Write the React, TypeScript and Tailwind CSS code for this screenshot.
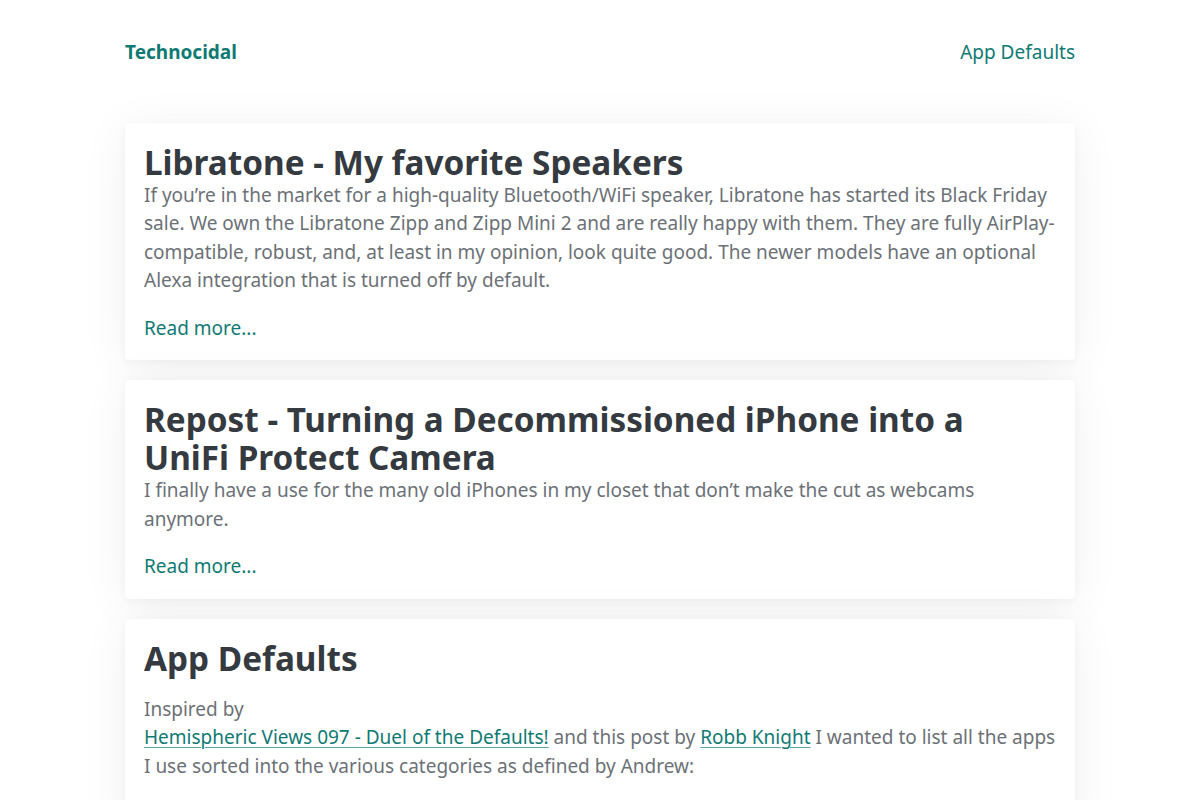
const posts = [
  {
    title: "Libratone - My favorite Speakers",
    body:
      "If you’re in the market for a high-quality Bluetooth/WiFi speaker, Libratone has started its Black Friday sale. We own the Libratone Zipp and Zipp Mini 2 and are really happy with them. They are fully AirPlay-compatible, robust, and, at least in my opinion, look quite good. The newer models have an optional Alexa integration that is turned off by default.",
  },
  {
    title: "Repost - Turning a Decommissioned iPhone into a UniFi Protect Camera",
    body:
      "I finally have a use for the many old iPhones in my closet that don’t make the cut as webcams anymore.",
  },
];

const card =
  "bg-white rounded-[4px] px-[19px] pt-[20px] pb-[18px] shadow-[0_2px_10px_rgba(15,23,42,0.04),0_6px_50px_rgba(15,23,42,0.06)]";

export default function App() {
  return (
    <div className="min-h-[800px] bg-white font-['Noto_Sans',sans-serif] text-[19px] leading-[28.5px] text-[#6c7177]">
      <div className="mx-auto w-[950px] pt-[38px]">
        {/* HEADER */}
        <header className="flex items-center justify-between">
          <a className="font-bold text-[19px] text-[#0f7a74]">Technocidal</a>
          <a className="text-[19px] text-[#0f7a74]">App Defaults</a>
        </header>

        {/* POSTS */}
        <main className="mt-[56px] flex flex-col gap-[20px]">
          {posts.map((p) => (
            <article key={p.title} className={card}>
              <h2 className="text-[33.3px] leading-[38px] font-bold text-[#343a40]">{p.title}</h2>
              <p>{p.body}</p>
              <a className="mt-[19px] block text-[#0f7a74]">Read more...</a>
            </article>
          ))}
          <article className={card + " pb-[60px]"}>
            <h2 className="text-[33.3px] leading-[38px] font-bold text-[#343a40]">App Defaults</h2>
            <p className="mt-[18px]">Inspired by</p>
            <p>
              <a className="text-[#0f7a74] underline decoration-[#5aa7a2] decoration-1 underline-offset-[3px]">
                Hemispheric Views 097 - Duel of the Defaults!
              </a>{" "}
              and this post by{" "}
              <a className="text-[#0f7a74] underline decoration-[#5aa7a2] decoration-1 underline-offset-[3px]">
                Robb Knight
              </a>{" "}
              I wanted to list all the apps I use sorted into the various categories as defined by Andrew:
            </p>
          </article>
        </main>
      </div>
    </div>
  );
}
